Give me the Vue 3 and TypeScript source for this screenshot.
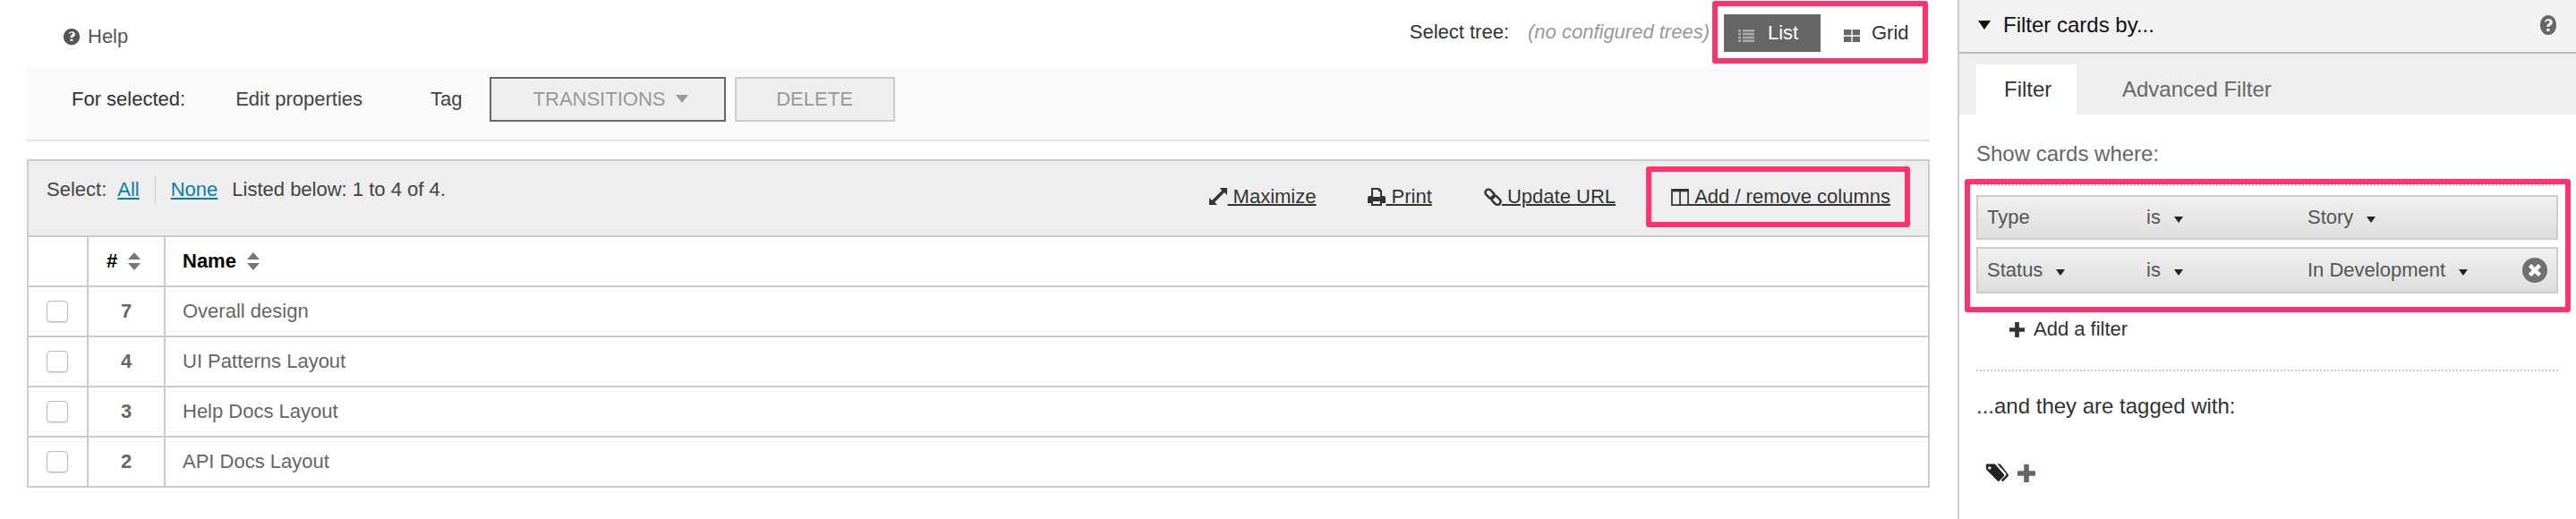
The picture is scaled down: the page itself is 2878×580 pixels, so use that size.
<template>
  <div class="page">
    <div class="main">
      <div class="top-row">
        <a class="help-link">
          <svg class="ico help-ico" viewBox="0 0 24 24"><path fill-rule="evenodd" d="M12 1a11 11 0 1 0 0 22 11 11 0 0 0 0-22zm-1.800 17v-3h3.400v3zm3.400-4.800h-3.300v-1c0-2.200 3.100-2.700 3.100-4.300 0-.9-.7-1.400-1.500-1.400-.9 0-1.600.6-2.100 1.400L7.700 7.800C8.600 6.100 10.200 5 12.300 5c2.400 0 4.600 1.400 4.600 3.800 0 3-3.300 3.300-3.300 4.400z"/></svg>
          Help
        </a>
        <div class="tree-select">
          <span class="tree-label">Select tree:</span>
          <em class="tree-empty">(no configured trees)</em>
        </div>
        <div class="view-switch">
          <span class="view-btn active">
            <svg class="view-ico" viewBox="0 0 18 14"><path d="M0 0h3v2.500H0zM5 0h13v2.500H5zM0 3.800h3v2.500H0zM5 3.800h13v2.500H5zM0 7.700h3v2.500H0zM5 7.700h13v2.500H5zM0 11.500h3V14H0zM5 11.500h13V14H5z"/></svg>
            List
          </span>
          <span class="view-btn">
            <svg class="view-ico grid" viewBox="0 0 18 14"><path d="M0 0h8.300v6.300H0zM9.700 0H18v6.300H9.700zM0 7.700h8.300V14H0zM9.700 7.700H18V14H9.700z"/></svg>
            Grid
          </span>
        </div>
      </div>

      <div class="bulk-bar">
        <span class="bulk-label">For selected:</span>
        <span class="bulk-action edit">Edit properties</span>
        <span class="bulk-action tag">Tag</span>
        <button class="btn transitions">TRANSITIONS<i class="btn-caret"></i></button>
        <button class="btn delete">DELETE</button>
      </div>

      <div class="card-list">
        <div class="list-head">
          <div class="list-info">
            <span>Select:</span>
            <a class="sel-link all">All</a>
            <a class="sel-link none">None</a>
            <span class="listed">Listed below: 1 to 4 of 4.</span>
          </div>
          <div class="list-tools">
            <a class="tool-link">
              <svg class="tool-ico" viewBox="0 0 20 24"><path d="M12 2h8v8l-3-3L6 18l3 3H0v-8l3 3L14 5z"/></svg><span>&nbsp;Maximize</span>
            </a>
            <a class="tool-link">
              <svg class="tool-ico" viewBox="0 0 20 24"><path fill-rule="evenodd" d="M4 2h9l3 3v6h2a2 2 0 0 1 2 2v6h-4v3H4v-3H0v-6a2 2 0 0 1 2-2h2zm2 2v8h8V6h-2V4zm0 13v3h8v-3z"/></svg><span>&nbsp;Print</span>
            </a>
            <a class="tool-link">
              <svg class="tool-ico line-ico" viewBox="0 0 20 24"><rect x="0.800" y="5.200" width="11.500" height="7" rx="3.500" transform="rotate(45 6.500 8.700)"/><rect x="7.700" y="12.300" width="11.500" height="7" rx="3.500" transform="rotate(45 13.500 15.800)"/></svg><span>&nbsp;Update URL</span>
            </a>
            <div class="columns-box">
              <a class="tool-link">
                <svg class="tool-ico line-ico thin" viewBox="0 0 21 24"><path d="M1 3.500h19v18H1zM10.500 3.500v18M1 5h19"/></svg><span>&nbsp;Add / remove columns</span>
              </a>
            </div>
          </div>
        </div>
        <div class="list-row head-row">
          <div class="c-check"></div>
          <div class="c-num"># <svg class="sort" viewBox="0 0 16 20"><path d="M8 0l7 8H1zM8 20l-7-8h14z"/></svg></div>
          <div class="c-name">Name <svg class="sort" viewBox="0 0 16 20"><path d="M8 0l7 8H1zM8 20l-7-8h14z"/></svg></div>
        </div>
        <div v-for="card in cards" :key="card.num" class="list-row">
          <div class="c-check"><span class="checkbox"></span></div>
          <div class="c-num">{{ card.num }}</div>
          <div class="c-name">{{ card.name }}</div>
        </div>
      </div>
    </div>

    <aside class="sidebar">
      <div class="side-head">
        <i class="head-caret"></i>
        <span class="side-title">Filter cards by...</span>
        <svg class="side-help" viewBox="0 0 24 24"><path fill-rule="evenodd" d="M12 1C6.500 1 3 6 3 12s3.500 11 9 11 9-5 9-11S17.500 1 12 1zm-1.800 18v-3h3.400v3zm3.400-5h-3.300v-1c0-2.200 3.100-2.700 3.100-4.500 0-.9-.7-1.500-1.500-1.500-.9 0-1.600.6-2.100 1.500L7.700 8.200C8.600 6.300 10.200 5 12.300 5c2.400 0 4.600 1.500 4.600 4 0 3-3.300 3.500-3.300 4.600z"/></svg>
      </div>
      <div class="tabs">
        <span class="tab active">Filter</span>
        <span class="tab">Advanced Filter</span>
      </div>
      <div class="side-body">
        <p class="where">Show cards where:</p>
        <div class="filter-box">
          <div class="filter-rows">
            <div v-for="f in filters" :key="f.prop" class="filter-row">
              <span class="f-prop">{{ f.prop }}<i v-if="f.removable" class="f-caret"></i></span>
              <span class="f-op">is<i class="f-caret"></i></span>
              <span class="f-val">{{ f.value }}<i class="f-caret"></i></span>
              <svg v-if="f.removable" class="f-remove" viewBox="0 0 28 28"><circle cx="14" cy="14" r="14" fill="#707070"/><path d="M8.500 8.500l11 11M19.500 8.500l-11 11" stroke="#fff" stroke-width="4.500"/></svg>
            </div>
          </div>
        </div>
        <div class="add-filter">
          <svg class="plus" viewBox="0 0 18 18"><path d="M6.500 0h5v6.500H18v5h-6.500V18h-5v-6.500H0v-5h6.500z"/></svg>
          <span>Add a filter</span>
        </div>
        <div class="tagged">...and they are tagged with:</div>
        <div class="tag-line">
          <svg class="tags-ico" viewBox="0 0 26 21"><path fill-rule="evenodd" d="M1 0h8c1 0 1.500.3 2 1l9.500 11c.7.900.7 1.600 0 2.400l-5 5.300c-.8.800-1.600.8-2.400 0L2 8.500C1.300 7.800 0 6.500 0 5.500V1c0-.6.400-1 1-1zm3 3a1.800 1.800 0 1 0 0 3.600A1.800 1.800 0 0 0 4 3z"/><path d="M13 0h2c1 0 1.500.3 2 1l8.500 11c.7.900.7 1.600 0 2.400l-5 5.300c-.8.800-1.600.8-2.400 0l-.6-.6 5.500-5.800c.7-.8.700-1.500 0-2.300z"/></svg>
          <svg class="plus gray" viewBox="0 0 18 18"><path d="M6.500 0h5v6.500H18v5h-6.500V18h-5v-6.500H0v-5h6.500z"/></svg>
        </div>
      </div>
    </aside>
  </div>
</template>

<script setup lang="ts">
const cards = [
  { num: 7, name: 'Overall design' },
  { num: 4, name: 'UI Patterns Layout' },
  { num: 3, name: 'Help Docs Layout' },
  { num: 2, name: 'API Docs Layout' }
];

const filters = [
  { prop: 'Type', value: 'Story', removable: false },
  { prop: 'Status', value: 'In Development', removable: true }
];
</script>

<style>
html,
body {
  margin: 0;
  background: #fff;
}
</style>

<style scoped>
.page {
  display: flex;
  width: 2878px;
  height: 580px;
  overflow: hidden;
  font-family: "Liberation Sans", Arial, sans-serif;
  font-size: 22px;
  color: #333;
}

.main {
  width: 2187px;
  flex-shrink: 0;
  box-sizing: border-box;
  padding: 0 31px 0 30px;
}

.top-row {
  display: flex;
  height: 76px;
  box-sizing: border-box;
  padding-top: 1px;
}

.help-link {
  display: flex;
  align-items: center;
  height: 80px;
  padding-left: 40px;
  color: #555;
}

.ico {
  fill: #555;
}

.help-ico {
  width: 20px;
  height: 20px;
  margin-right: 8px;
}

.tree-select {
  display: flex;
  align-items: center;
  height: 70px;
  margin-left: auto;
}

.tree-label {
  margin-right: 21px;
}

.tree-empty {
  margin-right: 3px;
  color: #999;
}

.view-switch {
  display: flex;
  box-sizing: border-box;
  width: 241px;
  height: 70px;
  margin-right: 2px;
  border: 6px solid #ff3270;
  border-radius: 3px;
  padding: 9px 0 0 7px;
}

.view-btn {
  display: flex;
  align-items: center;
  height: 42px;
  color: #333;
}

.view-btn.active {
  box-sizing: border-box;
  width: 108px;
  padding-left: 16px;
  background: #666;
  color: #fff;
  margin-right: 26px;
}

.view-ico {
  width: 18px;
  height: 14px;
  margin-right: 15px;
  margin-top: 5px;
  fill: #aaa;
}

.view-ico.grid {
  fill: #666;
  margin-right: 13px;
}

.bulk-bar {
  display: flex;
  align-items: flex-start;
  height: 80px;
  background: #fafafa;
  border-bottom: 2px solid #e2e2e2;
}

.bulk-label {
  margin: 22px 0 0 50px;
}

.bulk-action {
  margin-top: 22px;
  color: #444;
}

.edit {
  margin-left: 56px;
}

.tag {
  margin-left: 76px;
}

.btn {
  box-sizing: border-box;
  height: 50px;
  margin-top: 10px;
  background: #eee;
  font-family: inherit;
  font-size: 22px;
  color: #999;
  padding: 0;
}

.transitions {
  width: 264px;
  margin-left: 30px;
  border: 2px solid #666;
  padding-left: 8px;
}

.delete {
  width: 179px;
  margin-left: 10px;
  border: 2px solid #ccc;
}

.btn-caret {
  display: inline-block;
  margin-left: 12px;
  vertical-align: 3px;
  border-left: 7px solid transparent;
  border-right: 7px solid transparent;
  border-top: 9px solid #999;
}

.card-list {
  margin-top: 20px;
  border: 2px solid #ccc;
}

.list-head {
  display: flex;
  justify-content: space-between;
  height: 85px;
  box-sizing: border-box;
  background: #eee;
  border-bottom: 2px solid #ccc;
  padding: 6px 20px 0 20px;
}

.list-info {
  display: flex;
  align-items: flex-start;
  height: 32px;
  margin-top: 10px;
  line-height: 32px;
  color: #444;
}

.sel-link {
  color: #0a7fa8;
  text-decoration: underline;
}

.all {
  margin-left: 12px;
  padding-right: 17px;
  border-right: 1px solid #ccc;
}

.none {
  margin-left: 17px;
}

.listed {
  margin-left: 16px;
}

.list-tools {
  display: flex;
  align-items: center;
  height: 68px;
}

.tool-link {
  display: flex;
  align-items: center;
  color: #333;
  text-decoration: underline;
  text-decoration-thickness: 2px;
}

.tool-link + .tool-link {
  margin-left: 58px;
}

.tool-ico {
  width: 20px;
  height: 24px;
  fill: #333;
  flex-shrink: 0;
}

.line-ico {
  fill: none;
  stroke: #333;
  stroke-width: 2.500;
}

.line-ico.thin {
  stroke-width: 1.800;
}

.columns-box {
  display: flex;
  align-items: center;
  box-sizing: border-box;
  height: 68px;
  margin-left: 34px;
  padding: 0 16px 0 22px;
  border: 6px solid #ff3270;
  border-radius: 3px;
}

.list-row {
  display: flex;
  height: 56px;
  box-sizing: border-box;
  border-bottom: 2px solid #ccc;
  color: #666;
}

.list-row:last-child {
  border-bottom: none;
  height: 54px;
}

.list-row > div {
  display: flex;
  align-items: center;
}

.c-check {
  box-sizing: border-box;
  width: 67px;
  flex-shrink: 0;
  padding-left: 20px;
  border-right: 2px solid #ccc;
}

.c-num {
  box-sizing: border-box;
  width: 86px;
  flex-shrink: 0;
  justify-content: center;
  border-right: 2px solid #ccc;
  font-weight: 700;
}

.c-name {
  padding-left: 19px;
}

.head-row {
  color: #000;
  font-weight: 700;
}

.head-row .c-num {
  justify-content: flex-start;
  padding-left: 20px;
  color: #000;
  white-space: pre;
}

.head-row .c-name {
  white-space: pre;
}

.sort {
  width: 16px;
  height: 20px;
  margin-left: 5px;
  fill: #777;
}

.checkbox {
  display: block;
  box-sizing: border-box;
  width: 24px;
  height: 24px;
  border: 1px solid #bbb;
  border-radius: 4px;
  box-shadow: 0 1px 1px #ddd;
  background: #fff;
}

.sidebar {
  box-sizing: border-box;
  width: 691px;
  height: 580px;
  border-left: 2px solid #ccc;
}

.side-head {
  display: flex;
  align-items: center;
  height: 60px;
  box-sizing: border-box;
  padding: 0 19px 2px 21px;
  background: #f2f2f2;
  border-bottom: 2px solid #bbb;
  font-size: 24px;
  color: #111;
}

.head-caret {
  border-left: 7.500px solid transparent;
  border-right: 7.500px solid transparent;
  border-top: 10px solid #111;
  margin-right: 14px;
}

.side-title {
  flex: 1;
}

.side-help {
  width: 24px;
  height: 24px;
  fill: #666;
}

.tabs {
  display: flex;
  align-items: flex-end;
  height: 68px;
  padding-left: 19px;
  background: #eee;
  font-size: 24px;
}

.tab {
  display: flex;
  align-items: center;
  height: 56px;
  padding: 0 30px;
  color: #666;
}

.tab.active {
  width: 112px;
  box-sizing: border-box;
  padding: 0 31px;
  background: #fff;
  color: #333;
}

.tab + .tab {
  margin-left: 21px;
}

.side-body {
  padding: 0 20px 0 19px;
}

.where {
  margin: 0;
  height: 72px;
  line-height: 32px;
  padding-top: 28px;
  box-sizing: border-box;
  font-size: 24px;
  color: #666;
}

.filter-box {
  box-sizing: border-box;
  height: 149px;
  margin: 0 -14px 0 -13px;
  padding: 0 8px 0 7px;
  border: 6px solid #ff3270;
  border-radius: 3px;
}

.filter-rows {
  padding-top: 10px;
  border-top: 2px dotted #ccc;
}

.filter-row {
  display: flex;
  align-items: center;
  box-sizing: border-box;
  height: 50px;
  padding-left: 10px;
  margin-bottom: 8px;
  border: 2px solid #ccc;
  background: linear-gradient(#f0f0f0, #dedede);
  color: #555;
}

.filter-row:last-child {
  height: 52px;
}

.f-prop {
  width: 178px;
}

.f-op {
  width: 180px;
}

.f-val {
  flex: 1;
}

.f-caret {
  display: inline-block;
  margin-left: 15px;
  vertical-align: 1px;
  border-left: 5.500px solid transparent;
  border-right: 5.500px solid transparent;
  border-top: 7px solid #222;
}

.f-remove {
  width: 28px;
  height: 28px;
  margin-right: 10px;
}

.add-filter {
  display: flex;
  align-items: center;
  height: 38px;
  padding-left: 37px;
}

.plus {
  width: 17px;
  height: 17px;
  margin-right: 10px;
  fill: #333;
}

.plus.gray {
  width: 20px;
  height: 20px;
  fill: #666;
  margin: 2px 0 0 10px;
}

.tagged {
  margin-top: 26px;
  padding-top: 23px;
  height: 32px;
  line-height: 32px;
  font-size: 24px;
  border-top: 2px dotted #ccc;
}

.tag-line {
  display: flex;
  align-items: center;
  margin-top: 47px;
  padding-left: 11px;
}

.tags-ico {
  width: 25px;
  height: 21px;
  fill: #222;
}
</style>
